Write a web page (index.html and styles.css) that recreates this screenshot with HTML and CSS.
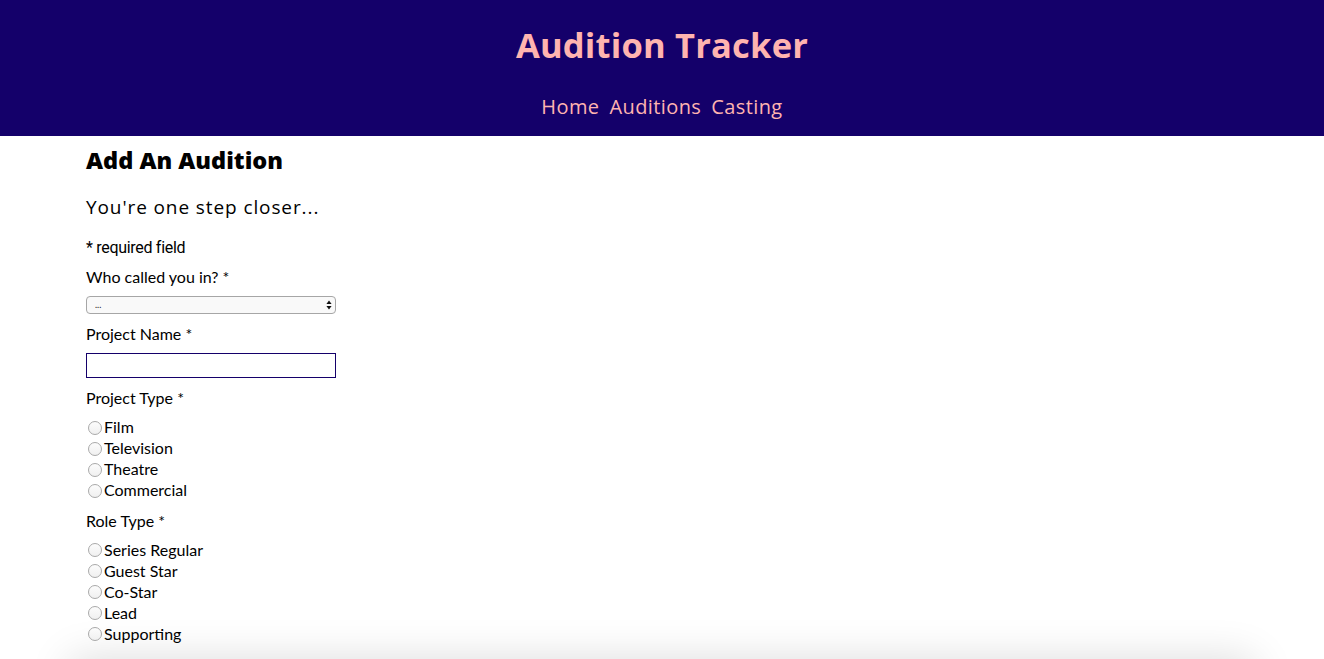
FILE: index.html
```html
<!DOCTYPE html>
<html lang="en">
<head>
<meta charset="utf-8">
<title>Audition Tracker</title>
<link rel="stylesheet" href="styles.css">
</head>
<body>
<header class="site-header">
  <h1 class="site-title">Audition Tracker</h1>
  <nav class="site-nav">
    <a href="#">Home</a>
    <a href="#">Auditions</a>
    <a href="#">Casting</a>
  </nav>
</header>
<main class="content">
  <h2 class="page-title">Add An Audition</h2>
  <h3 class="subtitle">You're one step closer...</h3>
  <p class="required-note">* required field</p>
  <form class="audition-form">
    <div class="field">
      <label class="field-label">Who called you in? *</label>
      <div class="select-wrap">
        <select class="select"><option>...</option></select>
        <svg class="select-arrows" width="6" height="10" viewBox="0 0 6 10"><path d="M3 0.5 L5.6 4 H0.4 Z M3 9.5 L5.6 6 H0.4 Z" fill="#111"/></svg>
      </div>
    </div>
    <div class="field">
      <label class="field-label">Project Name *</label>
      <input class="text-input" type="text">
    </div>
    <div class="field">
      <label class="field-label">Project Type *</label>
      <div class="radio-list">
        <label class="radio-row"><input class="radio" type="radio" name="ptype">Film</label>
        <label class="radio-row"><input class="radio" type="radio" name="ptype">Television</label>
        <label class="radio-row"><input class="radio" type="radio" name="ptype">Theatre</label>
        <label class="radio-row"><input class="radio" type="radio" name="ptype">Commercial</label>
      </div>
    </div>
    <div class="field">
      <label class="field-label">Role Type *</label>
      <div class="radio-list">
        <label class="radio-row"><input class="radio" type="radio" name="rtype">Series Regular</label>
        <label class="radio-row"><input class="radio" type="radio" name="rtype">Guest Star</label>
        <label class="radio-row"><input class="radio" type="radio" name="rtype">Co-Star</label>
        <label class="radio-row"><input class="radio" type="radio" name="rtype">Lead</label>
        <label class="radio-row"><input class="radio" type="radio" name="rtype">Supporting</label>
      </div>
    </div>
  </form>
  <div class="card"></div>
</main>
</body>
</html>
```

FILE: styles.css
```css
* { box-sizing: border-box; }
html, body { margin: 0; padding: 0; background: #fff; }
body { font-family: "Lato", "Liberation Sans", sans-serif; color: #000; overflow: hidden; }

.site-header {
  background: #14006a;
  height: 136px;
  display: flex;
  flex-direction: column;
  align-items: center;
  padding-top: 22px;
}
.site-title {
  margin: 0;
  font-family: "Open Sans", "Liberation Sans", sans-serif;
  font-weight: 700;
  font-size: 34.5px;
  line-height: 46px;
  color: #ffb4b0;
  letter-spacing: 0.2px;
}
.site-nav {
  margin-top: 27px;
  display: flex;
  gap: 10px;
}
.site-nav a {
  font-family: "Open Sans", "Liberation Sans", sans-serif;
  font-size: 20px;
  line-height: 24px;
  color: #ffb4b0;
  text-decoration: none;
  letter-spacing: 0.4px;
}

.content { padding: 0 86px; }
.page-title {
  margin: 10px 0 0;
  font-family: "Open Sans", "Liberation Sans", sans-serif;
  font-weight: 800;
  font-size: 23.5px;
  line-height: 28px;
}
.subtitle {
  margin: 21px 0 0;
  font-family: "Open Sans", "Liberation Sans", sans-serif;
  font-weight: 400;
  font-size: 19px;
  line-height: 24px;
  letter-spacing: 0.9px;
}
.required-note {
  margin: 19px 0 0;
  font-family: "Roboto", "Liberation Sans", sans-serif;
  font-size: 16px;
  line-height: 19px;
  letter-spacing: -0.3px;
}
.audition-form { margin-top: 10px; }
.field { margin-bottom: 10.5px; display: flex; flex-direction: column; align-items: flex-start; }
.field-label {
  font-size: 16px;
  line-height: 19px;
  margin-bottom: 9.5px;
}
.select-wrap { position: relative; width: 250px; height: 18px; }
.select {
  display: block;
  appearance: none;
  -webkit-appearance: none;
  width: 250px;
  height: 18px;
  border: 1px solid #a6a6a6;
  border-radius: 4px;
  background: #f9f9f9;
  font-family: "Lato", sans-serif;
  font-size: 9px;
  padding: 0 8px;
  margin: 0;
  color: #222;
}
.select-arrows { position: absolute; right: 4px; top: 4px; pointer-events: none; }
.text-input {
  display: block;
  width: 250px;
  height: 25px;
  border: 1px solid #14006a;
  border-radius: 0;
  margin: 0;
  padding: 0 4px;
  background: #fff;
}
.radio-list { display: flex; flex-direction: column; margin-top: -0.5px; }
.radio-row {
  display: flex;
  align-items: center;
  font-size: 16px;
  line-height: 21px;
  height: 21px;
}
.radio {
  appearance: none;
  -webkit-appearance: none;
  width: 14px;
  height: 14px;
  border: 1px solid #a9a9a9;
  border-radius: 50%;
  margin: 2px 2px 0 2px;
  background: linear-gradient(#fcfcfc, #f0f0f0);
  flex: none;
}
.card {
  height: 200px;
  margin: 15px -16px 0;
  background: #fff;
  box-shadow: 0 0 40px rgba(0, 0, 0, 0.14);
}
```
